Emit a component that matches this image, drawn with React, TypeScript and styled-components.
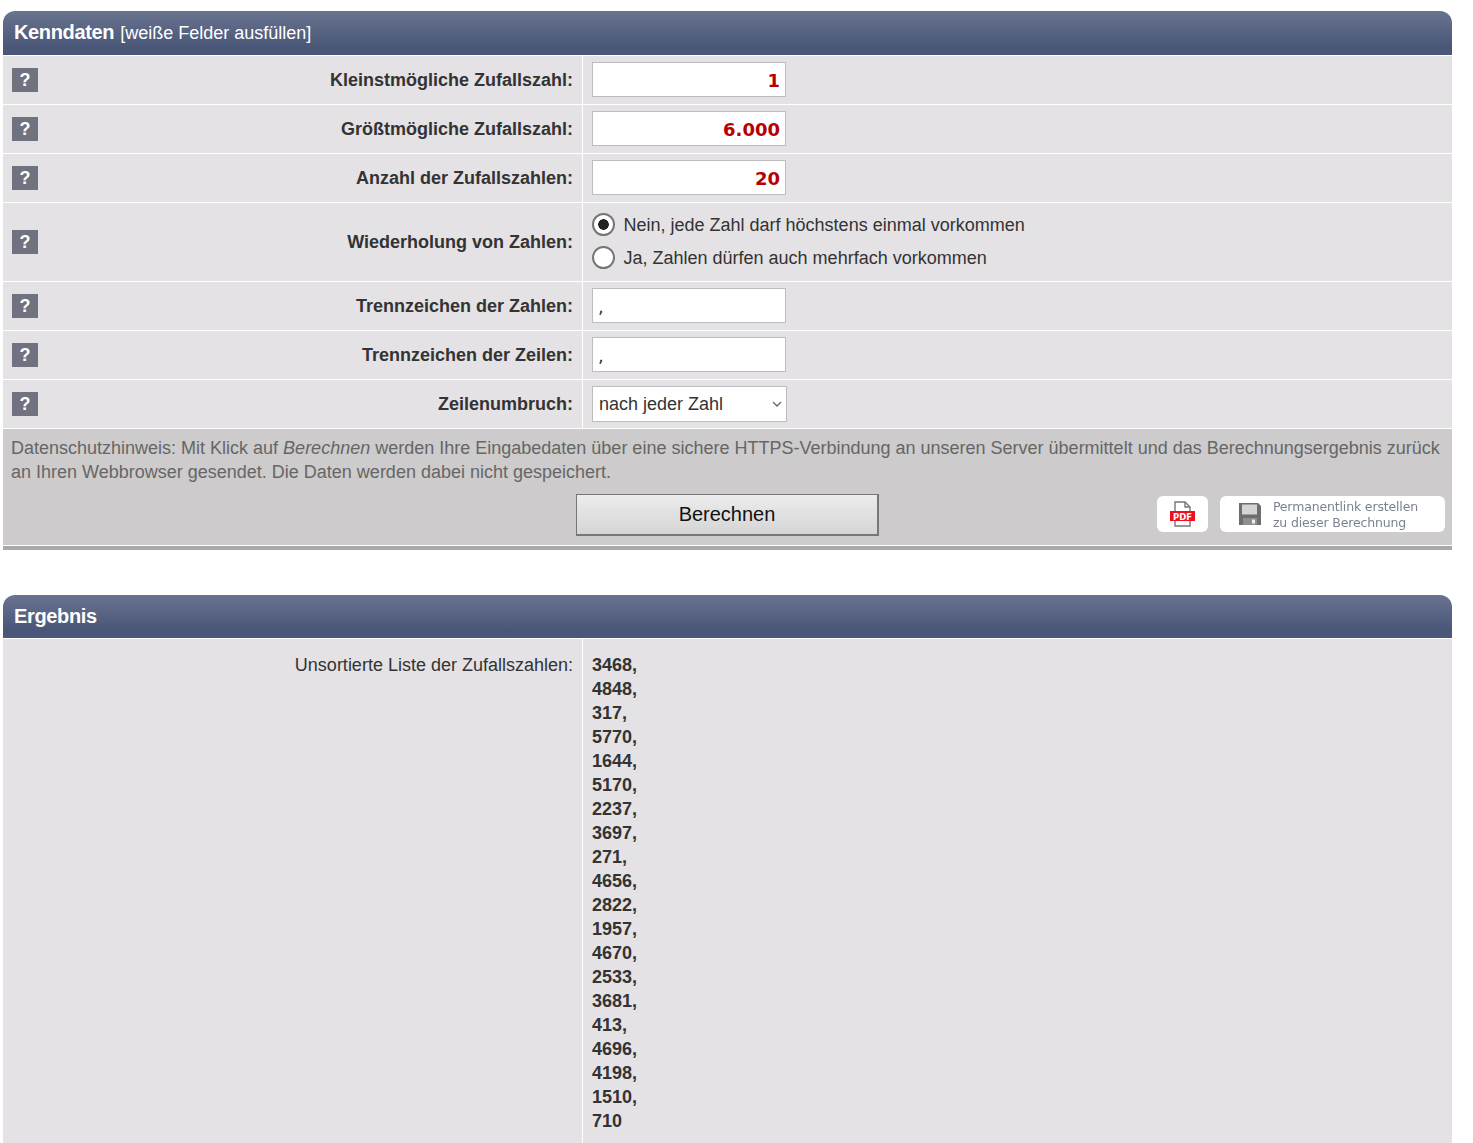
import styled, { createGlobalStyle } from 'styled-components'

const GlobalStyle = createGlobalStyle`
  html, body {
    margin: 0;
    padding: 0;
    height: 1143px;
    overflow: hidden;
    background: #fff;
  }
  body {
    font-family: "Liberation Sans", Arial, sans-serif;
    font-size: 18px;
    color: #333;
  }
`

const Page = styled.div`
  padding: 11px 21px 0 3px;
  display: flex;
  flex-direction: column;
  gap: 45px;
`

const Panel = styled.section``

const PanelHeader = styled.header<{ $height: number }>`
  height: ${props => props.$height}px;
  box-sizing: border-box;
  padding: 10px 0 0 11px;
  display: flex;
  align-items: baseline;
  gap: 6px;
  line-height: 23px;
  border-radius: 12px 12px 0 0;
  background: linear-gradient(#69748f, #4a5778 80%);
  color: #fff;
`

const PanelTitle = styled.h2`
  margin: 0;
  font-size: 20px;
  font-weight: bold;
  letter-spacing: -0.35px;
`

const PanelHint = styled.span`
  font-size: 18px;
  letter-spacing: 0;
`

const Row = styled.div<{ $height: number }>`
  display: grid;
  grid-template-columns: 580px 1fr;
  min-height: ${props => props.$height}px;
  background: #e4e2e5;
  border-top: 1px solid #fff;
`

const LabelCell = styled.div`
  display: flex;
  align-items: center;
  justify-content: space-between;
  padding: 0 9px;
  border-right: 1px solid #fff;
`

const HelpButton = styled.button`
  width: 26px;
  height: 24px;
  padding: 0;
  border: 0;
  background: #70727f;
  color: #fff;
  font-family: inherit;
  font-size: 18px;
  font-weight: bold;
`

const Label = styled.label`
  font-size: 18px;
  font-weight: bold;
  color: #333;
`

const FieldCell = styled.div`
  display: flex;
  flex-direction: column;
  justify-content: center;
  padding: 0 0 1px 9px;
`

const TextField = styled.input`
  width: 194px;
  height: 35px;
  box-sizing: border-box;
  padding: 2px 5px 0;
  border: 1px solid #bdbdbf;
  background: #fff;
  color: #333;
  font-family: "DejaVu Sans", Verdana, sans-serif;
  font-size: 18px;
  outline: none;
`

const NumberField = styled(TextField)`
  text-align: right;
  color: #b80000;
  font-weight: bold;
`

const Select = styled.select`
  width: 195px;
  height: 36px;
  margin-top: 1px;
  box-sizing: border-box;
  padding: 0 2px 0 6px;
  appearance: none;
  border: 1px solid #bdbdbf;
  border-radius: 0;
  background: #fff url("data:image/svg+xml,%3Csvg xmlns='http://www.w3.org/2000/svg' width='10' height='6'%3E%3Cpath d='M1 1l4 4 4-4' fill='none' stroke='%23666' stroke-width='1.3'/%3E%3C/svg%3E") no-repeat right 4px center;
  color: #333;
  font-family: "Liberation Sans", Arial, sans-serif;
  font-size: 18px;
`

const RadioGroup = styled.div`
  display: flex;
  flex-direction: column;
  gap: 10px;
`

const RadioLabel = styled.label`
  display: flex;
  align-items: center;
  gap: 8.5px;
  height: 23px;
  color: #333;
`

const Radio = styled.input`
  appearance: none;
  width: 23px;
  height: 23px;
  margin: 0 0 2px;
  box-sizing: border-box;
  border: 2px solid #767676;
  border-radius: 50%;
  background: #fff;

  &:checked {
    background: radial-gradient(circle, #222 0 5px, #fff 5.6px);
  }
`

const Footer = styled.div`
  background: #cdcbcc;
  border-top: 1px solid #fff;
  border-bottom: 4px solid #a9a9a9;
  box-shadow: inset 0 -1px 0 #fff;
  padding: 7px 8px 10px 8px;
`

const Notice = styled.p`
  margin: 0;
  font-size: 18px;
  line-height: 24px;
  color: #666;
`

const ActionRow = styled.div`
  display: grid;
  grid-template-columns: 1fr auto 1fr;
  align-items: center;
  margin-top: 10px;
`

const SubmitButton = styled.button`
  grid-column: 2;
  width: 303px;
  height: 42px;
  box-sizing: border-box;
  border: 1px solid #777;
  border-right-width: 2px;
  border-bottom-width: 2px;
  background: linear-gradient(#ececec, #d5d5d5);
  color: #111;
  font-family: inherit;
  font-size: 20px;
`

const ExportLinks = styled.div`
  grid-column: 3;
  justify-self: end;
  margin: 0 -1px 2px 0;
  display: flex;
  gap: 12px;
`

const ExportLink = styled.a`
  height: 36px;
  padding: 0 13px;
  display: flex;
  align-items: center;
  background: #fff;
  border-radius: 6px;
  color: #7a8290;
  font-family: "DejaVu Sans", sans-serif;
  font-size: 12.5px;
  line-height: 16px;
`

const PermalinkLink = styled(ExportLink)`
  padding: 0 27px 0 19px;
`

const PermalinkText = styled.span`
  margin-left: 12px;
  padding-top: 1px;
  white-space: nowrap;
  letter-spacing: -0.15px;
  filter: blur(0.4px);
`

const ResultLabelCell = styled(LabelCell)`
  align-items: flex-start;
  justify-content: flex-end;
  padding-top: 16px;
`

const ResultLabel = styled.span`
  font-size: 18px;
  color: #333;
`

const ResultList = styled.div`
  padding: 14px 0 30px 9px;
  font-size: 18px;
  font-weight: bold;
  line-height: 24px;
  color: #333;
`

const PdfIcon = () => (
  <svg width="25" height="26" viewBox="0 0 25 26">
    <path d="M5 1h10l5 5v19H5z" fill="#fff" stroke="#777" strokeWidth="1.4" />
    <path d="M15 1v5h5" fill="none" stroke="#777" strokeWidth="1.4" />
    <rect x="0" y="10" width="25" height="10" fill="#ef0f1e" />
    <text x="12.5" y="18.5" textAnchor="middle" fontFamily="'DejaVu Sans', sans-serif" fontSize="8.5" fontWeight="bold" fill="#fff">PDF</text>
  </svg>
)

const SaveIcon = () => (
  <svg width="22" height="22" viewBox="0 0 22 22">
    <path d="M0 0h19l3 3v19H0z" fill="#6e6e6e" />
    <rect x="3" y="1.5" width="15" height="10" fill="#d4d4d4" />
    <rect x="4" y="15" width="14" height="7" fill="#8e8e8e" />
    <rect x="13" y="16.5" width="3" height="4" fill="#eee" />
  </svg>
)

const numbers = [
  3468, 4848, 317, 5770, 1644, 5170, 2237, 3697, 271, 4656,
  2822, 1957, 4670, 2533, 3681, 413, 4696, 4198, 1510, 710,
]

const Help = () => <HelpButton type="button">?</HelpButton>

export default function App() {
  return (
    <>
      <GlobalStyle />
      <Page>
        <Panel>
          <PanelHeader $height={44}>
            <PanelTitle>Kenndaten</PanelTitle>
            <PanelHint>[weiße Felder ausfüllen]</PanelHint>
          </PanelHeader>
          <Row $height={48}>
            <LabelCell><Help /><Label>Kleinstmögliche Zufallszahl:</Label></LabelCell>
            <FieldCell><NumberField defaultValue="1" /></FieldCell>
          </Row>
          <Row $height={48}>
            <LabelCell><Help /><Label>Größtmögliche Zufallszahl:</Label></LabelCell>
            <FieldCell><NumberField defaultValue="6.000" /></FieldCell>
          </Row>
          <Row $height={48}>
            <LabelCell><Help /><Label>Anzahl der Zufallszahlen:</Label></LabelCell>
            <FieldCell><NumberField defaultValue="20" /></FieldCell>
          </Row>
          <Row $height={78}>
            <LabelCell><Help /><Label>Wiederholung von Zahlen:</Label></LabelCell>
            <FieldCell>
              <RadioGroup>
                <RadioLabel><Radio type="radio" name="repeat" defaultChecked />Nein, jede Zahl darf höchstens einmal vorkommen</RadioLabel>
                <RadioLabel><Radio type="radio" name="repeat" />Ja, Zahlen dürfen auch mehrfach vorkommen</RadioLabel>
              </RadioGroup>
            </FieldCell>
          </Row>
          <Row $height={48}>
            <LabelCell><Help /><Label>Trennzeichen der Zahlen:</Label></LabelCell>
            <FieldCell><TextField defaultValue="," /></FieldCell>
          </Row>
          <Row $height={48}>
            <LabelCell><Help /><Label>Trennzeichen der Zeilen:</Label></LabelCell>
            <FieldCell><TextField defaultValue="," /></FieldCell>
          </Row>
          <Row $height={48}>
            <LabelCell><Help /><Label>Zeilenumbruch:</Label></LabelCell>
            <FieldCell>
              <Select defaultValue="zahl">
                <option value="zahl">nach jeder Zahl</option>
              </Select>
            </FieldCell>
          </Row>
          <Footer>
            <Notice>
              Datenschutzhinweis: Mit Klick auf <em>Berechnen</em> werden Ihre Eingabedaten über eine sichere HTTPS-Verbindung an unseren Server übermittelt und das Berechnungsergebnis zurück an Ihren Webbrowser gesendet. Die Daten werden dabei nicht gespeichert.
            </Notice>
            <ActionRow>
              <SubmitButton type="button">Berechnen</SubmitButton>
              <ExportLinks>
                <ExportLink><PdfIcon /></ExportLink>
                <PermalinkLink>
                  <SaveIcon />
                  <PermalinkText>Permanentlink erstellen<br />zu dieser Berechnung</PermalinkText>
                </PermalinkLink>
              </ExportLinks>
            </ActionRow>
          </Footer>
        </Panel>
        <Panel>
          <PanelHeader $height={43}>
            <PanelTitle>Ergebnis</PanelTitle>
          </PanelHeader>
          <Row $height={500}>
            <ResultLabelCell>
              <ResultLabel>Unsortierte Liste der Zufallszahlen:</ResultLabel>
            </ResultLabelCell>
            <ResultList>
              {numbers.map((n, i) => (
                <div key={n}>{n}{i < numbers.length - 1 ? ',' : ''}</div>
              ))}
            </ResultList>
          </Row>
        </Panel>
      </Page>
    </>
  )
}
